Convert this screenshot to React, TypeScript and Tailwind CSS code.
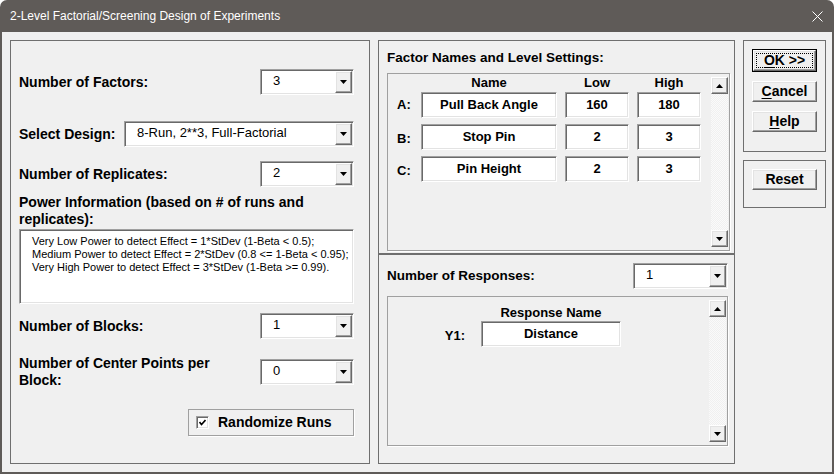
import React from 'react'

const sunken =
  'border border-t-[#a0a0a0] border-l-[#a0a0a0] border-b-white border-r-white shadow-[inset_1px_1px_0_#696969,inset_-1px_-1px_0_#e3e3e3]'
const raised =
  'border border-t-white border-l-white border-b-[#696969] border-r-[#696969] shadow-[inset_-1px_-1px_0_#a0a0a0,inset_1px_1px_0_#e3e3e3]'

function Arrow({ up = false }: { up?: boolean }) {
  return (
    <svg width="7" height="4" viewBox="0 0 7 4" className="block">
      {up ? <polygon points="3.5,0 7,4 0,4" fill="#000" /> : <polygon points="0,0 7,0 3.5,4" fill="#000" />}
    </svg>
  )
}

function ArrowButton({ up = false }: { up?: boolean }) {
  return (
    <div className={`w-[17px] h-[17px] shrink-0 bg-[#f0f0f0] flex items-center justify-center ${raised}`}>
      <Arrow up={up} />
    </div>
  )
}

function Dropdown({ value, className = '' }: { value: string; className?: string }) {
  return (
    <div className={`h-[26px] bg-white flex items-stretch ${sunken} ${className}`}>
      <span className="flex-1 pl-[12px] pt-[3px] text-[13px] leading-[16px] text-black">{value}</span>
      <div className={`w-[17px] shrink-0 my-[1px] mr-[1px] bg-[#f0f0f0] flex items-center justify-center ${raised}`}>
        <Arrow />
      </div>
    </div>
  )
}

function Field({ value, className = '' }: { value: string; className?: string }) {
  return (
    <div
      className={`h-[26px] bg-white flex items-center justify-center text-[13px] font-bold text-black ${sunken} ${className}`}
    >
      {value}
    </div>
  )
}

function Scrollbar() {
  return (
    <div className="w-[17px] shrink-0 flex flex-col bg-[repeating-conic-gradient(#f0f0f0_0%_25%,#fafafa_0%_50%)] bg-[length:2px_2px]">
      <ArrowButton up />
      <div className="flex-1" />
      <ArrowButton />
    </div>
  )
}

function Button({ label, hot, isDefault = false }: { label: string; hot?: number; isDefault?: boolean }) {
  const text =
    hot === undefined ? (
      label
    ) : (
      <>
        {label.slice(0, hot)}
        <span className="underline underline-offset-2">{label[hot]}</span>
        {label.slice(hot + 1)}
      </>
    )
  if (isDefault) {
    return (
      <div className="w-[65px] h-[23px] border border-black">
        <div className={`h-full bg-[#f0f0f0] p-[2px] ${raised}`}>
          <div className="h-full border border-dotted border-black flex items-center justify-center text-[14px] font-bold">
            {text}
          </div>
        </div>
      </div>
    )
  }
  return (
    <div className={`w-[65px] h-[21px] bg-[#f0f0f0] flex items-center justify-center text-[14px] font-bold ${raised}`}>
      {text}
    </div>
  )
}

const factors = [
  { id: 'A', name: 'Pull Back Angle', low: '160', high: '180' },
  { id: 'B', name: 'Stop Pin', low: '2', high: '3' },
  { id: 'C', name: 'Pin Height', low: '2', high: '3' },
]

export default function App() {
  return (
    <div className="w-[834px] h-[474px] flex flex-col bg-[#5f5b58] font-['Liberation_Sans',Arial,sans-serif] text-black overflow-hidden rounded-t-[7px]">
      {/* title bar */}
      <div className="h-[32px] shrink-0 flex items-center justify-between pl-[10px] pr-[10px] text-white">
        <span className="font-['Liberation_Sans',Arial,sans-serif] text-[12px] pb-[1px]">
          2-Level Factorial/Screening Design of Experiments
        </span>
        <svg width="11" height="11" viewBox="0 0 11 11" className="mr-[1px]">
          <path d="M0.5 0.5 L10.5 10.5 M10.5 0.5 L0.5 10.5" stroke="#fff" strokeWidth="1" />
        </svg>
      </div>

      {/* body */}
      <div className="flex-1 mx-[2px] mb-[2px] bg-[#f0f0f0] flex gap-[8px] pl-[8px] pr-[6px] pt-[8px] pb-[8px]">
        {/* left group */}
        <div className="w-[360px] shrink-0 border border-[#6f6f6f] flex flex-col pl-[8px] pr-[15px] pt-[28px]">
          <div className="flex items-center justify-between">
            <span className="text-[14px] font-bold">Number of Factors:</span>
            <Dropdown value="3" className="w-[94px]" />
          </div>
          <div className="flex items-center justify-between mt-[26px]">
            <span className="text-[14px] font-bold">Select Design:</span>
            <Dropdown value="8-Run, 2**3, Full-Factorial" className="w-[230px]" />
          </div>
          <div className="flex items-center justify-between mt-[14px]">
            <span className="text-[14px] font-bold">Number of Replicates:</span>
            <Dropdown value="2" className="w-[94px]" />
          </div>
          <div className="mt-[7px] text-[14px] font-bold leading-[17px]">
            Power Information (based on # of runs and
            <br />
            replicates):
          </div>
          <div className={`mt-[1px] h-[75px] bg-white pl-[12px] pt-[5px] text-[11px] leading-[13px] ${sunken}`}>
            <div>Very Low Power to detect Effect = 1*StDev (1-Beta &lt; 0.5);</div>
            <div>Medium Power to detect Effect = 2*StDev (0.8 &lt;= 1-Beta &lt; 0.95);</div>
            <div>Very High Power to detect Effect = 3*StDev (1-Beta &gt;= 0.99).</div>
          </div>
          <div className="flex items-center justify-between mt-[9px]">
            <span className="text-[14px] font-bold">Number of Blocks:</span>
            <Dropdown value="1" className="w-[94px]" />
          </div>
          <div className="flex items-center justify-between mt-[16px]">
            <span className="text-[14px] font-bold leading-[17px]">
              Number of Center Points per
              <br />
              Block:
            </span>
            <Dropdown value="0" className="w-[94px]" />
          </div>
          <div className="flex justify-end mt-[20px]">
            <div className="w-[166px] h-[27px] border border-[#a0a0a0] shadow-[1px_1px_0_#fff] flex items-center pl-[7px] gap-[9px]">
              <div className={`w-[13px] h-[13px] bg-white flex items-center justify-center ${sunken}`}>
                <svg width="7" height="7" viewBox="0 0 7 7">
                  <path d="M0.5 3 L2.5 5.5 L6.5 1" stroke="#000" strokeWidth="1.6" fill="none" />
                </svg>
              </div>
              <span className="text-[14px] font-bold">Randomize Runs</span>
            </div>
          </div>
        </div>

        {/* middle panel */}
        <div className="w-[357px] shrink-0 border border-[#6f6f6f] flex flex-col">
          <div className="h-[214px] border-b-2 border-[#6f6f6f] flex flex-col pl-[8px] pr-[4px]">
            <div className="h-[32px] flex items-center text-[13.5px] font-bold pt-[2px]">Factor Names and Level Settings:</div>
            <div className="h-[178px] border border-[#a0a0a0] shadow-[1px_1px_0_#fff] flex">
              <div className="flex-1 flex flex-col pl-[9px] pt-[1px]">
                <div className="flex text-[13px] font-bold leading-[16px]">
                  <div className="w-[24px]" />
                  <div className="w-[136px] text-center">Name</div>
                  <div className="w-[64px] ml-[8px] text-center">Low</div>
                  <div className="w-[64px] ml-[8px] text-center">High</div>
                </div>
                {factors.map((f, i) => (
                  <div key={f.id} className={`flex items-center ${i === 0 ? 'mt-[1px]' : 'mt-[6px]'}`}>
                    <span className={`w-[24px] text-[13px] font-bold ${i === 0 ? '' : 'pt-[4px]'}`}>{f.id}:</span>
                    <Field value={f.name} className="w-[136px]" />
                    <Field value={f.low} className="w-[64px] ml-[8px]" />
                    <Field value={f.high} className="w-[64px] ml-[8px]" />
                  </div>
                ))}
              </div>
              <div className="py-[3px] pr-[1px] flex">
                <Scrollbar />
              </div>
            </div>
          </div>

          <div className="flex-1 flex flex-col pl-[8px] pr-[6px]">
            <div className="flex items-center justify-between mt-[8px]">
              <span className="text-[13.5px] font-bold">Number of Responses:</span>
              <Dropdown value="1" className="w-[95px]" />
            </div>
            <div className="mt-[7px] h-[150px] border border-[#a0a0a0] shadow-[1px_1px_0_#fff] flex">
              <div className="flex-1 flex flex-col pt-[8px]">
                <div className="text-[13px] font-bold leading-[16px] text-center ml-[93px] w-[140px]">Response Name</div>
                <div className="flex items-center">
                  <span className="w-[93px] text-right pr-[16px] text-[13px] font-bold pt-[4px]">Y1:</span>
                  <Field value="Distance" className="w-[140px]" />
                </div>
              </div>
              <div className="py-[3px] pr-[1px] flex">
                <Scrollbar />
              </div>
            </div>
          </div>
        </div>

        {/* buttons */}
        <div className="w-[83px] shrink-0 flex flex-col gap-[8px]">
          <div className="h-[112px] border border-[#6f6f6f] flex flex-col items-center pt-[8px] gap-[9px]">
            <Button label="OK >>" hot={0} isDefault />
            <Button label="Cancel" hot={0} />
            <Button label="Help" hot={0} />
          </div>
          <div className="h-[48px] border border-[#6f6f6f] flex flex-col items-center pt-[8px]">
            <Button label="Reset" />
          </div>
        </div>
      </div>
    </div>
  )
}
